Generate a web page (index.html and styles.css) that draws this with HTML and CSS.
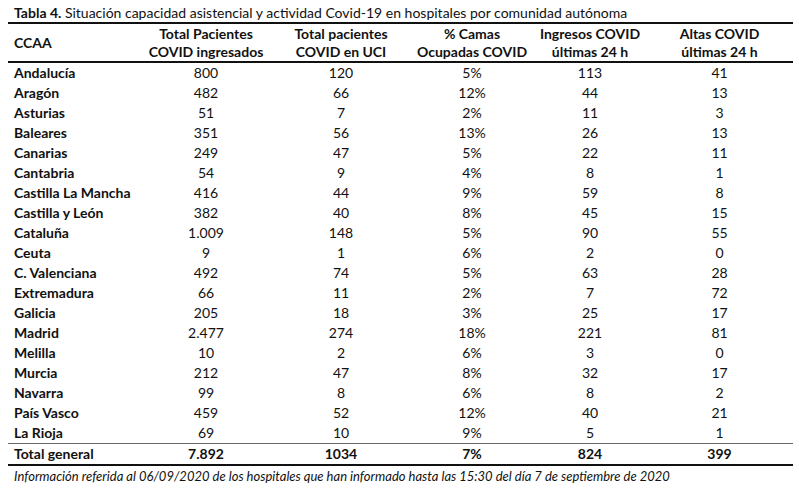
FILE: index.html
```html
<!DOCTYPE html>
<html lang="es">
<head>
<meta charset="utf-8">
<title>Tabla 4</title>
<link rel="stylesheet" href="styles.css">
</head>
<body>
<div class="page">
  <p class="title"><b>Tabla 4.</b> Situación capacidad asistencial y actividad Covid-19 en hospitales por comunidad autónoma</p>
  <table class="data">
    <colgroup>
      <col class="c1"><col class="c2"><col class="c3"><col class="c4"><col class="c5"><col class="c6">
    </colgroup>
    <thead>
      <tr>
        <th class="name">CCAA</th>
        <th>Total Pacientes<br>COVID ingresados</th>
        <th>Total pacientes<br>COVID en UCI</th>
        <th>% Camas<br>Ocupadas COVID</th>
        <th>Ingresos COVID<br>últimas 24 h</th>
        <th>Altas COVID<br>últimas 24 h</th>
      </tr>
    </thead>
    <tbody>
      <tr><td class="name">Andalucía</td><td>800</td><td>120</td><td>5%</td><td>113</td><td>41</td></tr>
      <tr><td class="name">Aragón</td><td>482</td><td>66</td><td>12%</td><td>44</td><td>13</td></tr>
      <tr><td class="name">Asturias</td><td>51</td><td>7</td><td>2%</td><td>11</td><td>3</td></tr>
      <tr><td class="name">Baleares</td><td>351</td><td>56</td><td>13%</td><td>26</td><td>13</td></tr>
      <tr><td class="name">Canarias</td><td>249</td><td>47</td><td>5%</td><td>22</td><td>11</td></tr>
      <tr><td class="name">Cantabria</td><td>54</td><td>9</td><td>4%</td><td>8</td><td>1</td></tr>
      <tr><td class="name">Castilla La Mancha</td><td>416</td><td>44</td><td>9%</td><td>59</td><td>8</td></tr>
      <tr><td class="name">Castilla y León</td><td>382</td><td>40</td><td>8%</td><td>45</td><td>15</td></tr>
      <tr><td class="name">Cataluña</td><td>1.009</td><td>148</td><td>5%</td><td>90</td><td>55</td></tr>
      <tr><td class="name">Ceuta</td><td>9</td><td>1</td><td>6%</td><td>2</td><td>0</td></tr>
      <tr><td class="name">C. Valenciana</td><td>492</td><td>74</td><td>5%</td><td>63</td><td>28</td></tr>
      <tr><td class="name">Extremadura</td><td>66</td><td>11</td><td>2%</td><td>7</td><td>72</td></tr>
      <tr><td class="name">Galicia</td><td>205</td><td>18</td><td>3%</td><td>25</td><td>17</td></tr>
      <tr><td class="name">Madrid</td><td>2.477</td><td>274</td><td>18%</td><td>221</td><td>81</td></tr>
      <tr><td class="name">Melilla</td><td>10</td><td>2</td><td>6%</td><td>3</td><td>0</td></tr>
      <tr><td class="name">Murcia</td><td>212</td><td>47</td><td>8%</td><td>32</td><td>17</td></tr>
      <tr><td class="name">Navarra</td><td>99</td><td>8</td><td>6%</td><td>8</td><td>2</td></tr>
      <tr><td class="name">País Vasco</td><td>459</td><td>52</td><td>12%</td><td>40</td><td>21</td></tr>
      <tr><td class="name">La Rioja</td><td>69</td><td>10</td><td>9%</td><td>5</td><td>1</td></tr>
    </tbody>
    <tfoot>
      <tr class="total"><td class="name">Total general</td><td>7.892</td><td>1034</td><td>7%</td><td>824</td><td>399</td></tr>
    </tfoot>
  </table>
  <p class="note">Información referida al 06/09/2020 de los hospitales que han informado hasta las 15:30 del día 7 de septiembre de 2020</p>
</div>
</body>
</html>
```

FILE: styles.css
```css
html, body {
  margin: 0;
  padding: 0;
  background: #ffffff;
}

body {
  font-family: Lato, "Open Sans", sans-serif;
  color: #111111;
}

.page {
  padding: 4px 6px 0 8px;
}

.title {
  margin: 0 0 0 6px;
  font-size: 14px;
  line-height: 18px;
  white-space: nowrap;
}

.title b {
  font-weight: 700;
}

.data {
  width: 785px;
  border-collapse: collapse;
  table-layout: fixed;
}

.c1 { width: 132px; }
.c2 { width: 132px; }
.c3 { width: 138px; }
.c4 { width: 124px; }
.c5 { width: 112px; }
.c6 { width: 147px; }

.data th {
  font-size: 14px;
  font-weight: 700;
  line-height: 18px;
  height: 37px;
  padding: 0;
  text-align: center;
  border-top: 2px solid #111;
  border-bottom: 2px solid #111;
}

.data td {
  font-size: 14px;
  line-height: 20px;
  height: 20px;
  padding: 0;
  text-align: center;
  white-space: nowrap;
}

.data .name {
  text-align: left;
  padding-left: 6px;
  font-weight: 700;
}

.total td {
  font-weight: 700;
  border-top: 1px solid #6a6a6a;
  border-bottom: 2px solid #111;
  height: 19px;
}

.note {
  margin: 2px 0 0 6px;
  font-size: 13px;
  line-height: 16px;
  font-style: italic;
  white-space: nowrap;
}
```
